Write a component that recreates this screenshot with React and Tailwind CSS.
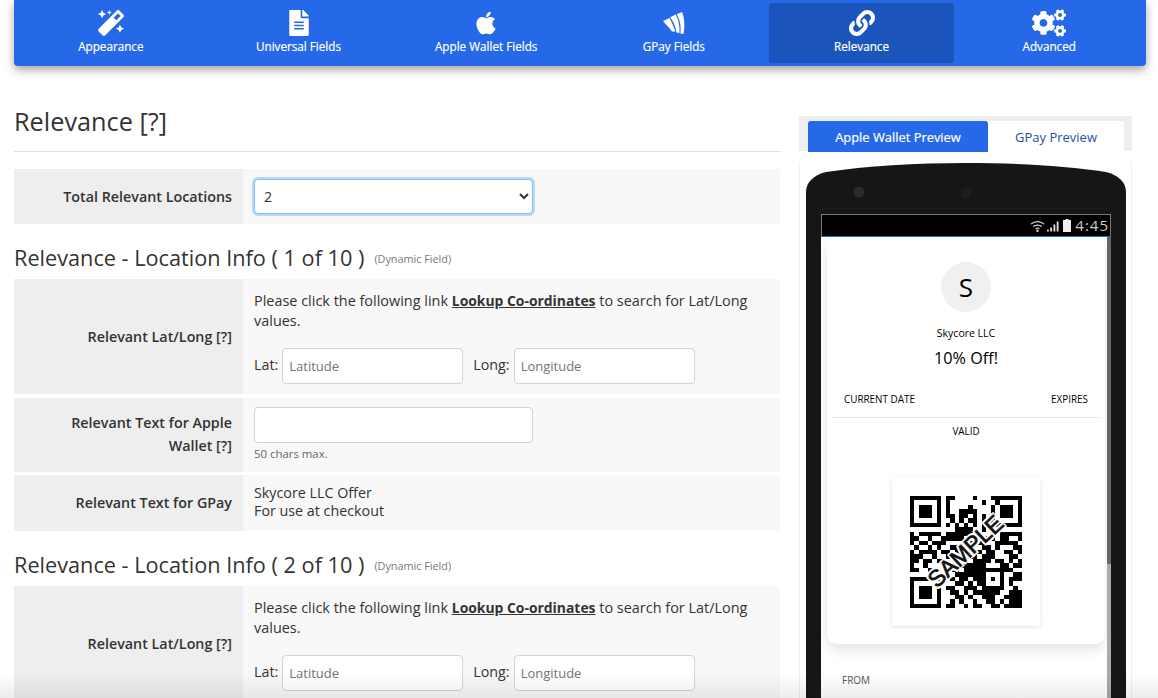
import React from 'react';
import { FaMagic, FaFileAlt, FaApple, FaLink, FaCogs } from 'react-icons/fa';

// small Google Wallet style mark, not in the icon packs
const WalletIcon = ({ className }) => (
  <svg viewBox="0 0 22 22" className={className} fill="currentColor">
    <path d="M0 9 L6.5 6 C8.5 10 10.5 14 12.5 19.5 L9 19.5 C7 16 3 13 0 9Z" />
    <path d="M7.2 5.2 L12.8 2.5 C15.5 8 17 14 16.5 21 L13.5 20.5 C13 15 10 9 7.2 5.2Z" />
    <path d="M13.8 2.2 L19 0 C21.5 6 22 14 20.5 22 L17.4 21.4 C18.5 14 16.5 7 13.8 2.2Z" />
  </svg>
);

const tabs = [
  { label: 'Appearance', icon: <FaMagic className="text-[26px]" /> },
  { label: 'Universal Fields', icon: <FaFileAlt className="text-[26px]" /> },
  { label: 'Apple Wallet Fields', icon: <FaApple className="text-[26px]" /> },
  { label: 'GPay Fields', icon: <WalletIcon className="w-[22px] h-[22px]" /> },
  { label: 'Relevance', icon: <FaLink className="text-[26px]" />, active: true },
  { label: 'Advanced', icon: <FaCogs className="text-[34px] -my-[4px]" /> },
];

const qrRows = [
  '1111111011000010001111111',
  '1000001010000000100100001',
  '1011101010000100001011101',
  '1011101010011110001011101',
  '1011101011011010101011101',
  '1000001001010110101000001',
  '1111111010101010101111111',
  '0000000000111100100000000',
  '1011111011111111001011111',
  '1100100111110000011011001',
  '1011011100000111100111110',
  '0100101001111100110100011',
  '1011110110110011011001101',
  '1110010011000110111000110',
  '1101101100111011110110101',
  '1001000110011111100011011',
  '1100110001101111111111100',
  '0000000010111111100010011',
  '1111111001011011101010111',
  '1000001000110101100010100',
  '1011101011001110111110010',
  '1011101001101011111100111',
  '1011101000110100111001111',
  '1000001001010010011010111',
  '1111111011001011001101111',
];

const QrCode = () => (
  <div className="relative w-[112px] h-[112px]">
    <svg viewBox="0 0 25 25" className="w-[112px] h-[112px]" shapeRendering="crispEdges">
      {qrRows.map((row, y) =>
        row.split('').map((cell, x) =>
          cell === '1' ? <rect key={`${x}-${y}`} x={x} y={y} width="1" height="1" fill="#000" /> : null
        )
      )}
    </svg>
    <div className="absolute inset-0 flex items-center justify-center">
      <span className="-rotate-[43deg] text-[23px] leading-none text-[#111] font-['Liberation_Sans',sans-serif] [-webkit-text-stroke:0.7px_#111] [text-shadow:2px_0_0_#fff,-2px_0_0_#fff,0_2px_0_#fff,0_-2px_0_#fff,2px_2px_0_#fff,-2px_-2px_0_#fff,2px_-2px_0_#fff,-2px_2px_0_#fff]">
        SAMPLE
      </span>
    </div>
  </div>
);

const Row = ({ label, labelClass, children, className }) => (
  <div className={`flex mr-[1px] ${className || ''}`}>
    <div className={`w-[229px] shrink-0 bg-[#eeeeee] flex items-center justify-end text-right pl-4 pr-[11px] font-semibold text-[14.3px] leading-[23px] ${labelClass || ''}`}>
      {label}
    </div>
    <div className="flex-1 bg-[#f8f8f8] pl-[11px] pr-[10px]">{children}</div>
  </div>
);

const LatLong = () => (
  <div className="pt-[12px] pb-[10px]">
    <p className="text-[14.45px] leading-[20px]">
      Please click the following link <a className="text-[13.9px] font-bold underline">Lookup Co-ordinates</a> to search for Lat/Long values.
    </p>
    <div className="flex items-center mt-[17px] text-[14.3px]">
      <span className="mr-[4px] -mt-[2px]">Lat:</span>
      <input placeholder="Latitude" className="w-[181px] h-[36px] bg-white border border-[#ced4da] rounded px-[6px] text-[13px] placeholder:text-[#6c757d]" />
      <span className="ml-[10px] mr-[4px] -mt-[2px]">Long:</span>
      <input placeholder="Longitude" className="w-[181px] h-[36px] bg-white border border-[#ced4da] rounded px-[6px] text-[13px] placeholder:text-[#6c757d]" />
    </div>
  </div>
);

const SectionTitle = ({ n }) => (
  <div className="flex items-center h-[55px] pt-[12px]">
    <h3 className="text-[21.7px] leading-[30px]">Relevance - Location Info ( {n} of 10 )</h3>
    <span className="ml-[10px] mt-[4px] text-[10.8px] text-[#777]">(Dynamic Field)</span>
  </div>
);

const Phone = () => (
  <div className="relative ml-[6px] mt-[11px] w-[320px] h-[600px]">
    <svg viewBox="0 0 320 600" className="absolute inset-0 w-[320px] h-[600px]">
      <path d="M0 600 V30 C0 20 8 13 20 10 C100 -2 220 -2 300 10 C312 13 320 20 320 30 V600 Z" fill="#161616" />
      <circle cx="53" cy="30" r="5.5" fill="#2b2b2b" />
      <circle cx="160" cy="31" r="5.5" fill="#1d1d1d" />
    </svg>
    <div className="relative pt-[52px] px-[15px]">
      <div className="h-[23px] bg-black border border-[#777] border-b-[#1a73c0] flex items-center justify-end pr-[1px] text-[#ccc] text-[15px] tracking-[1px]">
        <svg viewBox="0 0 16 12" className="w-[15px] h-[12px] mr-[2px]" fill="none" stroke="#ddd" strokeWidth="1.4">
          <path d="M1 4 C5 0.5 11 0.5 15 4" />
          <path d="M3.5 6.5 C6 4.5 10 4.5 12.5 6.5" />
          <path d="M6 9 C7 8 9 8 10 9" />
          <circle cx="8" cy="11" r="0.6" fill="#ddd" />
        </svg>
        <svg viewBox="0 0 13 12" className="w-[12px] h-[12px] mr-[4px]" fill="#ddd">
          <path d="M0 10h2v2H0zM3.5 7.5h2V12h-2zM7 4.5h2V12H7zM10.5 1h2v11h-2z" />
        </svg>
        <svg viewBox="0 0 8 13" className="w-[8px] h-[13px] mr-[4px]" fill="#eee">
          <path d="M2.5 0h3v1H8v12H0V1h2.5z" />
        </svg>
        4:45
      </div>
      <div className="relative bg-white h-[525px] pr-[4px] overflow-hidden">
        <div className="absolute right-0 top-0 w-[4px] h-[327px] bg-[#666]" />
        <div className="absolute right-0 top-[327px] bottom-0 w-[4px] bg-[#aaa]" />
        <div className="ml-[6px] mr-[2px] h-[407px] bg-white rounded-[10px] shadow-[0_6px_12px_rgba(0,0,0,0.1)] flex flex-col items-center pt-[25px] text-black">
          <div className="w-[50px] h-[50px] rounded-full bg-[#f0f0f0] flex items-center justify-center text-[26px]">S</div>
          <div className="mt-[14px] text-[10.5px] leading-[14px]">Skycore LLC</div>
          <div className="mt-[7px] text-[16.2px] leading-[22px]">10% Off!</div>
          <div className="mt-[23px] w-full px-[17px] flex justify-between text-[9.9px] leading-[14px]">
            <span>CURRENT DATE</span>
            <span>EXPIRES</span>
          </div>
          <div className="mt-[11px] w-[266px] border-t border-[#e5e5e5]" />
          <div className="mt-[6px] text-[9.9px] leading-[14px]">VALID</div>
          <div className="mt-[39px] w-[148px] h-[149px] rounded-[3px] bg-white shadow-[0_1px_4px_rgba(0,0,0,0.12)] flex items-center justify-center">
            <QrCode />
          </div>
        </div>
        <div className="mt-[29px] pl-[21px] text-[10px] leading-[14px] text-[#555]">FROM</div>
      </div>
    </div>
  </div>
);

const App = () => (
  <div className="relative h-[698px] overflow-hidden bg-white text-[#333] font-['Open_Sans',sans-serif]">
    <nav className="ml-[14px] mr-[12px] h-[66px] bg-[#2569e8] rounded-b-[4px] shadow-[0_4px_10px_rgba(0,0,0,0.35)] flex py-[3px] px-[3px] text-white">
      {tabs.map((tab) => (
        <div
          key={tab.label}
          className={`flex-1 mx-[1px] flex flex-col items-center justify-end rounded-[3px] pb-[9px] ${tab.active ? 'bg-[#1b55bb]' : ''}`}
        >
          <div className="h-[26px] mb-[2px] flex items-center justify-center">{tab.icon}</div>
          <div className="text-[11.7px] leading-[16px] font-medium [-webkit-text-stroke:0.2px_white]">{tab.label}</div>
        </div>
      ))}
    </nav>

    <div className="flex pl-[14px] pt-[50px]">
      <div className="w-[767px] shrink-0">
        <div className="h-[35px] border-b border-[#e2e2e2] box-content">
          <h2 className="-translate-y-[2px] text-[25.3px] leading-[14px]">Relevance [?]</h2>
        </div>
        <Row label="Total Relevant Locations" className="mt-[17px] h-[55px]">
          <div className="pt-[10px]">
            <select className="w-[279px] h-[35px] bg-white border border-[#80bdff] rounded px-[5px] text-[14.3px] shadow-[0_0_0_2px_rgba(0,123,255,0.25)]">
              <option>2</option>
            </select>
          </div>
        </Row>
        <SectionTitle n={1} />
        <Row label="Relevant Lat/Long [?]" className="h-[115px]">
          <LatLong />
        </Row>
        <Row label={<>Relevant Text for Apple<br />Wallet [?]</>} labelClass="pb-[2px]" className="mt-[4px] h-[74px]">
          <div className="pt-[9px]">
            <input className="block w-[279px] h-[36px] bg-white border border-[#ced4da] rounded" />
            <div className="mt-[3px] text-[11.4px] leading-[15px] text-[#666]">50 chars max.</div>
          </div>
        </Row>
        <Row label="Relevant Text for GPay" labelClass="pb-[2px]" className="mt-[3px] h-[56px]">
          <div className="pt-[9px] text-[14.3px] leading-[18px]">
            Skycore LLC Offer
            <br />
            For use at checkout
          </div>
        </Row>
        <SectionTitle n={2} />
        <Row label="Relevant Lat/Long [?]" className="h-[115px]">
          <LatLong />
        </Row>
      </div>

      <div className="ml-[18px] w-[333px] shrink-0">
        <div className="h-[35px] bg-[#eeeeee] pt-[5px] pl-[9px] flex">
          <div className="w-[180px] h-[31px] pt-[2px] bg-[#2569e8] text-white rounded-t-[3px] flex items-center justify-center text-[12.9px] font-medium [-webkit-text-stroke:0.2px_white]">
            Apple Wallet Preview
          </div>
          <div className="w-[136px] h-[31px] pt-[2px] bg-white text-[#2a4f9e] flex items-center justify-center text-[13px]">
            GPay Preview
          </div>
        </div>
        <div className="border-x border-[#eeeeee] bg-white">
          <Phone />
        </div>
      </div>
    </div>

    <div className="absolute left-0 right-0 bottom-0 h-[26px] bg-gradient-to-b from-transparent to-[rgba(0,0,0,0.07)] pointer-events-none" />
  </div>
);

export default App;
